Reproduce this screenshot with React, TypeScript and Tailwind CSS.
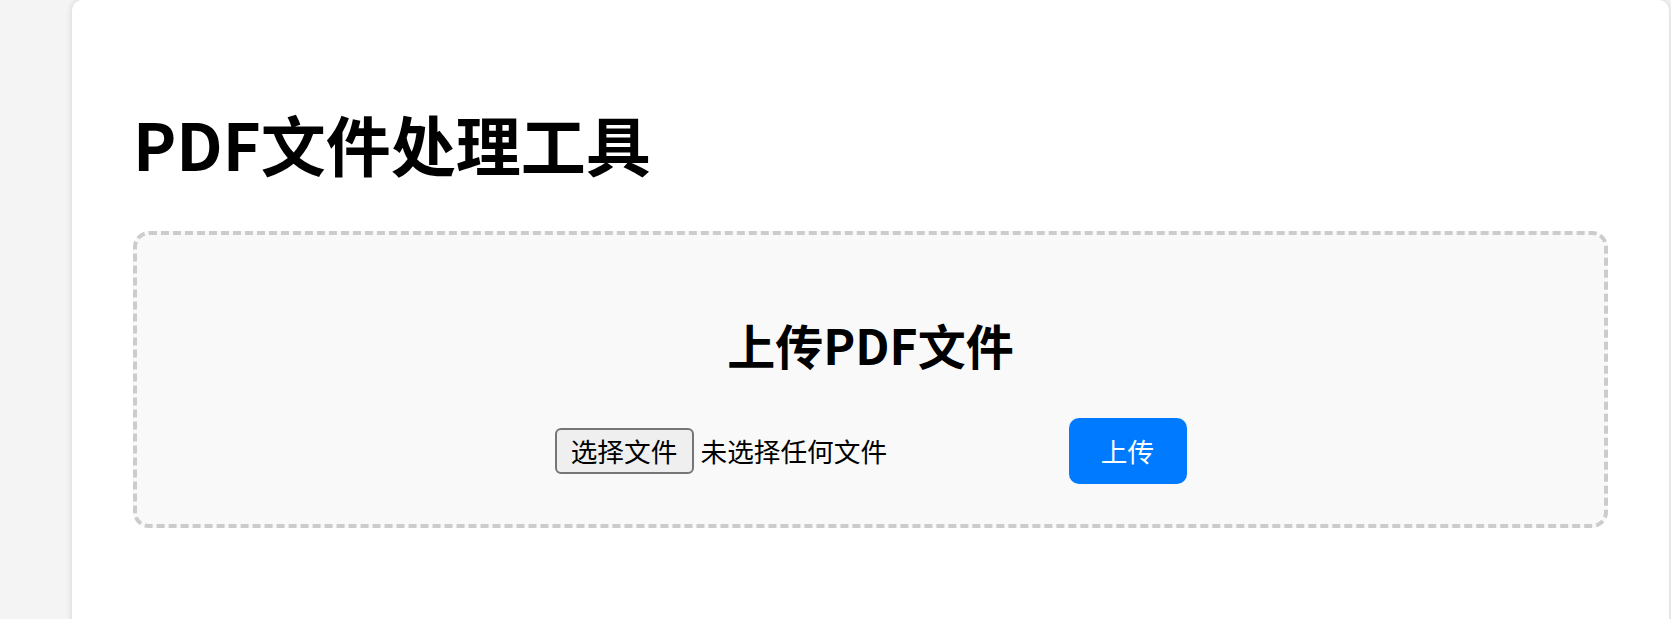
export default function App() {
  return (
    <div
      className="h-screen overflow-hidden bg-[#f4f4f4] pl-[72px]"
      style={{ fontFamily: '"Noto Sans CJK SC", "Noto Sans", sans-serif' }}
    >
      <div className="h-[680px] w-[1597px] rounded-[10px] bg-white px-[61px] pt-[111px] shadow-[0_0_6px_rgba(0,0,0,0.15)]">
        <h1 className="text-[65px] font-bold leading-none text-black">PDF文件处理工具</h1>

        <div className="mt-[55px] rounded-[16px] border-4 border-dashed border-[#cccccc] bg-[#f9f9f9] pt-[85px] pb-[40px]">
          <h2 className="text-center text-[48px] font-bold leading-none text-black">上传PDF文件</h2>

          <div className="mt-[50px] flex items-center justify-center gap-[10px]">
            {/* file input look-alike */}
            <div className="flex w-[504px] items-center gap-[7px] text-[26.67px] leading-none text-black">
              <span className="flex h-[46px] w-[139px] items-center justify-center rounded-[6px] border-2 border-[#767676] bg-[#efefef]">
                选择文件
              </span>
              <span>未选择任何文件</span>
            </div>
            <button className="flex h-[66px] w-[118px] items-center justify-center rounded-[10px] bg-[#007bff] text-[26.67px] leading-none text-white">
              上传
            </button>
          </div>
        </div>
      </div>
    </div>
  )
}
